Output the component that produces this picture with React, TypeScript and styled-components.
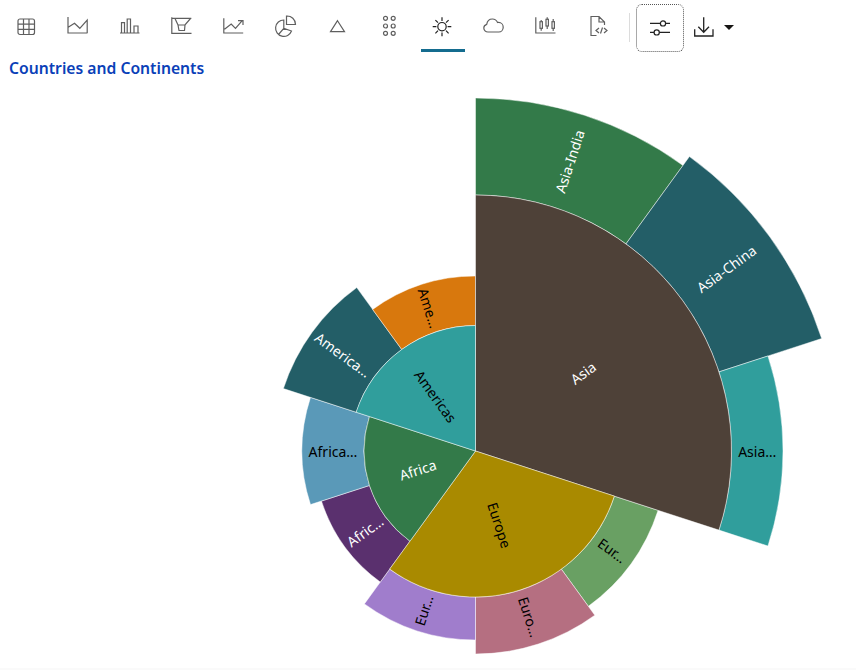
import React from "react";
import styled, { createGlobalStyle } from "styled-components";

const Global = createGlobalStyle`
  html, body { margin: 0; padding: 0; background: #fff; overflow: hidden; }
`;

const Page = styled.div`
  display: flex;
  flex-direction: column;
  width: 856px;
  height: 670px;
  font-family: "Noto Sans", sans-serif;
`;

const Toolbar = styled.div`
  display: flex;
  align-items: flex-start;
  gap: 8px;
  height: 48px;
  padding: 4px 0 0 5px;
`;

const ToolButton = styled.div<{ $active?: boolean }>`
  box-sizing: border-box;
  width: 44px;
  height: 48px;
  padding: 11px 0 0 8.5px;
  display: flex;
  justify-content: flex-start;
  color: ${(p) => (p.$active ? "#222" : "#5f5f5f")};
  border-bottom: 3px solid ${(p) => (p.$active ? "#146c8f" : "transparent")};
`;

const Divider = styled.div`
  width: 1px;
  height: 29px;
  margin: 9px -2px 0 0;
  background: #dcdcdc;
`;

const SettingsButton = styled.div`
  box-sizing: border-box;
  width: 48px;
  height: 48px;
  display: flex;
  align-items: center;
  justify-content: center;
  color: #222;
  border: 1px dotted #555;
  border-radius: 6px;
`;

const DownloadButton = styled.div`
  display: flex;
  align-items: center;
  gap: 8px;
  height: 46px;
  color: #222;
`;

const Caret = styled.div`
  width: 0;
  height: 0;
  border-left: 5px solid transparent;
  border-right: 5px solid transparent;
  border-top: 5px solid #161513;
  margin-top: 1px;
`;

const Icon = styled.svg<{ $weight?: number }>`
  display: block;
  width: 24px;
  height: 24px;
  fill: none;
  stroke: currentColor;
  stroke-width: ${(p) => p.$weight ?? 1.2};
`;

const Title = styled.div`
  height: 32px;
  padding-left: 9px;
  line-height: 33px;
  font-size: 15.7px;
  font-weight: 600;
  color: #0a3fb8;
`;

const Chart = styled.svg`
  display: block;
  flex: 1;
  width: 856px;
  min-height: 0;
`;

const SliceLabel = styled.text<{ $dark?: boolean }>`
  font-family: "Noto Sans", sans-serif;
  font-size: 14px;
  fill: ${(p) => (p.$dark ? "#000" : "#fff")};
  text-anchor: middle;
  dominant-baseline: central;
`;

const Footer = styled.div`
  height: 2px;
  background: #fafafa;
`;

const CX = 475.5;
const CY = 451;

type Slice = { label: string; from: number; to: number; r0: number; r1: number; fill: string; dark?: boolean };

const slices: Slice[] = [
  { label: "Asia-India", from: 0, to: 36, r0: 256, r1: 353, fill: "#337a49" },
  { label: "Asia-China", from: 36, to: 72, r0: 256, r1: 364, fill: "#235e67" },
  { label: "Asia…", from: 72, to: 108, r0: 256, r1: 307.5, fill: "#309e9c", dark: true },
  { label: "Eur…", from: 108, to: 144, r0: 146, r1: 192, fill: "#69a063", dark: true },
  { label: "Euro…", from: 144, to: 180, r0: 146, r1: 203, fill: "#b56f81", dark: true },
  { label: "Eur…", from: 180, to: 216, r0: 146, r1: 189, fill: "#a07dcc", dark: true },
  { label: "Afric…", from: 216, to: 252, r0: 111.5, r1: 162, fill: "#5a306e" },
  { label: "Africa…", from: 252, to: 288, r0: 111.5, r1: 173.5, fill: "#5a99b8", dark: true },
  { label: "America…", from: 288, to: 324, r0: 125.5, r1: 202, fill: "#235e67" },
  { label: "Ame…", from: 324, to: 360, r0: 125.5, r1: 175, fill: "#d8780d", dark: true },
  { label: "Asia", from: 0, to: 108, r0: 0, r1: 256, fill: "#4e4138" },
  { label: "Europe", from: 108, to: 216, r0: 0, r1: 146, fill: "#a98a00", dark: true },
  { label: "Africa", from: 216, to: 288, r0: 0, r1: 111.5, fill: "#337a49" },
  { label: "Americas", from: 288, to: 360, r0: 0, r1: 125.5, fill: "#309e9c", dark: true },
];

const pt = (r: number, deg: number) => {
  const a = (deg * Math.PI) / 180;
  return `${(CX + r * Math.sin(a)).toFixed(2)} ${(CY - r * Math.cos(a)).toFixed(2)}`;
};

const arcPath = ({ from, to, r0, r1 }: Slice) => {
  const large = to - from > 180 ? 1 : 0;
  if (r0 === 0) return `M${CX} ${CY} L${pt(r1, from)} A${r1} ${r1} 0 ${large} 1 ${pt(r1, to)} Z`;
  return `M${pt(r0, from)} L${pt(r1, from)} A${r1} ${r1} 0 ${large} 1 ${pt(r1, to)} L${pt(r0, to)} A${r0} ${r0} 0 ${large} 0 ${pt(r0, from)} Z`;
};

const labelTransform = (s: Slice) => {
  const mid = (s.from + s.to) / 2;
  const r = (s.r0 + s.r1) / 2 + (s.r0 === 0 ? 5 : 0);
  const rot = mid < 180 ? mid - 90 : mid + 90;
  return `translate(${pt(r, mid)}) rotate(${rot})`;
};

const tools: React.ReactNode[] = [
  <>
    <rect x="4" y="4" width="16.5" height="15.5" rx="2" />
    <path d="M9.5 4v15.5M15 4v15.5M4 9.2h16.5M4 14.3h16.5" />
  </>,
  <path d="M2 2v16h19.5M2.2 12.3l6.3-4 5.3 5 7.4-8.3V18" />,
  <path d="M2 18h19.5M3.5 18V7.7h3V18M9.2 18V4h3.3v14M16 18v-7h4v7" />,
  <path d="M1.8 2.3v16h19.7M1.8 3.3h19.5M5 3.5h15.5L15 10H8zM8 10l1 5.5h5.5L15 10" />,
  <path d="M1.8 3.3V18h19.4M2.5 14.3L9.2 9l4.3 4.3 6.7-7.6M16 5.7h5V10" />,
  <>
    <path d="M9.8 5A8.2 8.2 0 1 0 17.5 16L9.8 13.3zM9.8 13.3L4.5 19.5" />
    <path d="M12.5 1A8.5 8.5 0 0 1 21.5 9.5H12.5z" />
  </>,
  <path d="M11.5 5.7l7 11h-14z" />,
  <>
    <circle cx="7.5" cy="3.3" r="2" />
    <circle cx="15.2" cy="3.3" r="2" />
    <circle cx="7.5" cy="11" r="2" />
    <circle cx="15.2" cy="11" r="2" />
    <circle cx="7.5" cy="18.3" r="2" />
    <circle cx="15.2" cy="18.3" r="2" />
  </>,
  <>
    <circle cx="12" cy="11.7" r="4.2" />
    <path d="M12 2.3V6M12 17.5v3.7M2.7 11.7h3.7M17.6 11.7h3.7M5.4 5.1L8 7.7M16 15.7l2.6 2.6M5.4 18.3L8 15.7M16 7.7l2.6-2.6" />
  </>,
  <path d="M6 17C3.6 17 1.8 15.2 1.8 13C1.8 11.2 3 9.8 4.7 9.3C5.2 6.2 7.5 4 10.4 4C12.8 4 14.6 5.3 15.6 7.5C16 7.4 16.3 7.4 16.6 7.4C19.2 7.4 21.2 9.6 21.2 12.2C21.2 14.9 19.2 17 16.8 17Z" />,
  <>
    <path d="M1.8 2.3V18h19.7" />
    <path d="M7.2 5v1.7M7.2 13.3v2.4M13.2 2.3v2M13.2 11v3M19.2 4v2.7M19.2 13.3V16" />
    <rect x="6" y="6.7" width="2.4" height="6.6" />
    <rect x="12" y="4.3" width="2.4" height="6.7" />
    <rect x="18" y="6.7" width="2.4" height="6.6" />
  </>,
  <path d="M10.5 20.5H5V1.5h8L18.5 7v3M13 1.5V7h5.5M13 13l-3 2.5 3 2.5M18 13l3 2.5-3 2.5M16.5 12.5l-2 6" />,
];

export default function App() {
  return (
    <Page>
      <Global />
      <Toolbar>
        {tools.map((t, i) => (
          <ToolButton key={i} $active={i === 8}>
            <Icon viewBox="0 0 24 24">{t}</Icon>
          </ToolButton>
        ))}
        <Divider />
        <SettingsButton>
          <Icon viewBox="0 0 24 24">
            <path d="M2 7.4h20M2 16.4h20" />
            <circle cx="15" cy="7.4" r="2.6" fill="#fff" />
            <circle cx="8.7" cy="16.4" r="2.6" fill="#fff" />
          </Icon>
        </SettingsButton>
        <DownloadButton>
          <Icon viewBox="0 0 24 24" $weight={1.3}>
            <path d="M11.7 2.3v15M6.3 11.7l5.4 5.6 5.3-5.6M2.7 14.3V21H21v-6.7" />
          </Icon>
          <Caret />
        </DownloadButton>
      </Toolbar>
      <Title>Countries and Continents</Title>
      <Chart viewBox="0 84 856 584">
        {slices.map((s, i) => (
          <path key={i} d={arcPath(s)} fill={s.fill} stroke="#fff" strokeOpacity={0.6} strokeWidth={0.8} />
        ))}
        {slices.map((s, i) => (
          <SliceLabel key={i} $dark={s.dark} transform={labelTransform(s)}>
            {s.label}
          </SliceLabel>
        ))}
      </Chart>
      <Footer />
    </Page>
  );
}
